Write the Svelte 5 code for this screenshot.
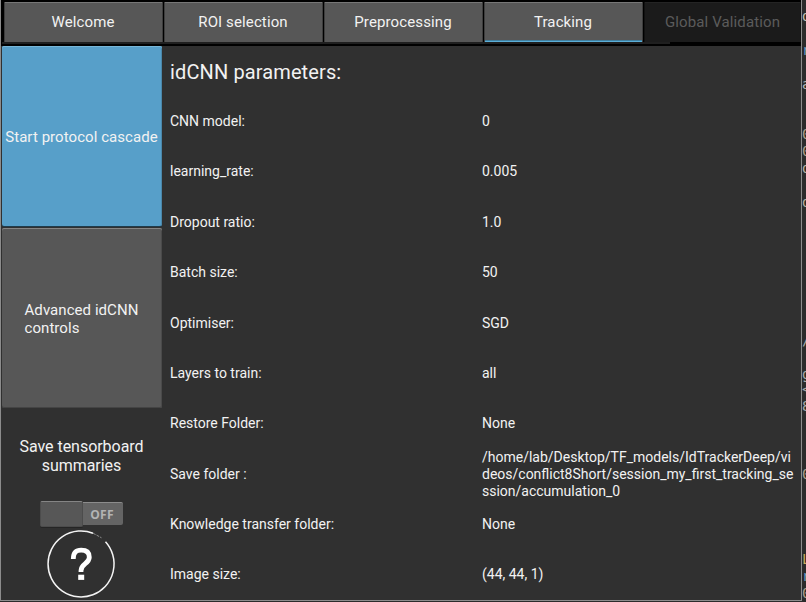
<script>
  const tabs = [
    { label: 'Welcome' },
    { label: 'ROI selection' },
    { label: 'Preprocessing' },
    { label: 'Tracking', active: true },
    { label: 'Global Validation', disabled: true }
  ];
  const params = [
    ['CNN model:', ['0']],
    ['learning_rate:', ['0.005']],
    ['Dropout ratio:', ['1.0']],
    ['Batch size:', ['50']],
    ['Optimiser:', ['SGD']],
    ['Layers to train:', ['all']],
    ['Restore Folder:', ['None']],
    ['Save folder :', [
      '/home/lab/Desktop/TF_models/IdTrackerDeep/vi',
      'deos/conflict8Short/session_my_first_tracking_se',
      'ssion/accumulation_0'
    ]],
    ['Knowledge transfer folder:', ['None']],
    ['Image size:', ['(44, 44, 1)']]
  ];
  // Fragments of the editor window lying behind the application
  const fragments = [
    [16, 'd', '#c9c2b4'], [50, 'r', '#6d9fc4'], [84, 'a', '#b9b9b9'],
    [134, '0', '#b0a08c'], [151, '0', '#b0a08c'], [168, 'd', '#b9b0a4'],
    [202, 'd', '#b9b0a4'], [340, '/', '#a9a9a9'], [374, 'g', '#a9a9a9'],
    [389, '<', '#a9a9a9'], [406, '8', '#a9a9a9'], [474, '0', '#b0a08c'],
    [559, 'L', '#c9a95c'], [576, 'r', '#6d9fc4'], [593, '0', '#b0a08c']
  ];
</script>

<div class="desktop">
  <div class="window">
    <nav>
      {#each tabs as t}
        <button class="tab" class:active={t.active} class:disabled={t.disabled}>{t.label}</button>
      {/each}
      <i class="strip"></i>
    </nav>
    <div class="body">
      <aside>
        <button class="big start"><span>Start protocol cascade</span></button>
        <button class="big advanced"><span>Advanced idCNN<br />controls</span></button>
        <div class="save">Save tensorboard<br />summaries</div>
        <div class="switch"><div class="knob"></div><div class="off">OFF</div></div>
        <svg class="help" width="70" height="70" viewBox="0 0 70 70" fill="none">
          <path d="M59.5 12.8A33 33 0 1 1 47 4.2" stroke="#f4f4f4" stroke-width="1.5" />
          <path d="M47 4.2L55.5 8.8" stroke="#8b8b8b" stroke-width="1" stroke-dasharray="3 1" />
          <path d="M27.3 30C27.3 23.5 30 21.2 35.2 21.2C40.5 21.2 43.3 23.5 43.3 28.2C43.3 35 35 34.5 35 41.8V43" stroke="#fff" stroke-width="4.8" />
          <path d="M32.2 45.7h6v5.2h-6z" fill="#fff" />
        </svg>
      </aside>
      <main>
        <h1>idCNN parameters:</h1>
        {#each params as [name, lines]}
          <div class="row">
            <div class="name">{name}</div>
            <div class="value">{#each lines as line}<div>{line}</div>{/each}</div>
          </div>
        {/each}
      </main>
    </div>
  </div>
  <div class="editor">
    {#each fragments as [y, ch, color]}
      <span style="top: {y - 8}px; color: {color}">{ch}</span>
    {/each}
  </div>
</div>

<style>
  .desktop {
    display: flex;
    width: 806px;
    height: 602px;
    background: #2b2b2b;
    font-family: Roboto, "Liberation Sans", sans-serif;
    color: #f2f2f2;
    overflow: hidden;
  }
  .window {
    box-sizing: border-box;
    width: 802px;
    height: 601px;
    border: solid #8c8c8c;
    border-width: 0 1px 1px 1px;
    background: #303030;
    display: flex;
    flex-direction: column;
  }
  nav {
    position: relative;
    box-sizing: border-box;
    flex: none;
    height: 46px;
    padding: 2px 0 4px 3px;
    background: #000;
    display: flex;
    gap: 1px;
  }
  button {
    box-sizing: border-box;
    border: 0;
    padding: 0;
    margin: 0;
    font-family: inherit;
    color: #f2f2f2;
  }
  .tab {
    flex: none;
    width: 159px;
    height: 40px;
    padding: 0 1px 1px 0;
    background: #575757;
    border: solid #3d3d3d;
    border-width: 0 1px;
    box-shadow: inset 0 1px #777;
    font-size: 15px;
    letter-spacing: 0.12px;
  }
  .active {
    box-shadow: inset 0 1px #777, inset 0 -1px #5cafd8, inset 0 -2px #3f7f9f;
  }
  .disabled {
    width: 157px;
    padding-right: 0;
    background: #1b1b1b;
    border-color: #111;
    box-shadow: inset 0 1px #242424;
    color: #5b5b5b;
  }
  .strip {
    position: absolute;
    left: 1px;
    top: 42px;
    width: 668px;
    height: 2px;
    background: #1f1f1f;
  }
  .body {
    flex: 1;
    display: flex;
    min-height: 0;
  }
  aside {
    flex: none;
    width: 161px;
    padding-left: 1px;
    box-sizing: border-box;
    display: flex;
    flex-direction: column;
    align-items: center;
  }
  .big {
    flex: none;
    width: 160px;
    height: 180px;
    padding: 2px 1px 0 0;
    border-radius: 2px;
    font-size: 15px;
    line-height: 18px;
    letter-spacing: 0.06px;
    white-space: nowrap;
    display: flex;
    align-items: center;
    justify-content: center;
    text-align: left;
  }
  .start {
    background: #579fc9;
    box-shadow: inset 0 1px #78b7d8, inset -1px 0 #4a87aa, 0 1px #203c4c;
  }
  .advanced {
    margin-top: 2px;
    background: #575757;
    box-shadow: inset 0 1px #858585, inset -1px 0 #4a4a4a, inset 0 -1px #444;
  }
  .save {
    margin-top: 29px;
    padding-right: 1px;
    text-align: center;
    font-size: 16px;
    line-height: 19px;
    letter-spacing: -0.03px;
    white-space: nowrap;
  }
  .switch {
    margin-top: 25px;
    margin-right: 1px;
    width: 83px;
    height: 27px;
    flex: none;
    display: flex;
    align-items: center;
  }
  .knob {
    box-sizing: border-box;
    width: 43px;
    height: 26px;
    background: #575757;
    border: 1px solid #4c4c4c;
    border-top-color: #858585;
    border-radius: 2px;
    box-shadow: 0 1px #252525;
  }
  .off {
    width: 40px;
    height: 23px;
    box-sizing: border-box;
    padding-right: 2px;
    background: #646464;
    border-top: 1px solid #8c8c8c;
    border-radius: 0 2px 2px 0;
    color: #b3b3b3;
    font: bold 12px/23px "Open Sans", sans-serif;
    letter-spacing: 0.3px;
    text-align: center;
  }
  .help {
    flex: none;
    margin-top: 2px;
    margin-right: 1.5px;
  }
  main {
    flex: 1;
    padding-left: 8px;
    display: flex;
    flex-direction: column;
  }
  h1 {
    margin: 0;
    height: 50.47px;
    flex: none;
    font-size: 20px;
    font-weight: 400;
    line-height: 52px;
    letter-spacing: 0.12px;
  }
  .row {
    flex: none;
    height: 50.35px;
    display: flex;
    align-items: center;
    font-size: 14px;
    line-height: 17px;
    white-space: nowrap;
  }
  .name {
    width: 312px;
  }
  .editor {
    position: relative;
    flex: none;
    width: 4px;
    height: 602px;
    background: #2b2b2b;
    overflow: hidden;
  }
  .editor span {
    position: absolute;
    left: 0;
    font: 14px/17px "DejaVu Sans Mono", monospace;
  }
</style>
